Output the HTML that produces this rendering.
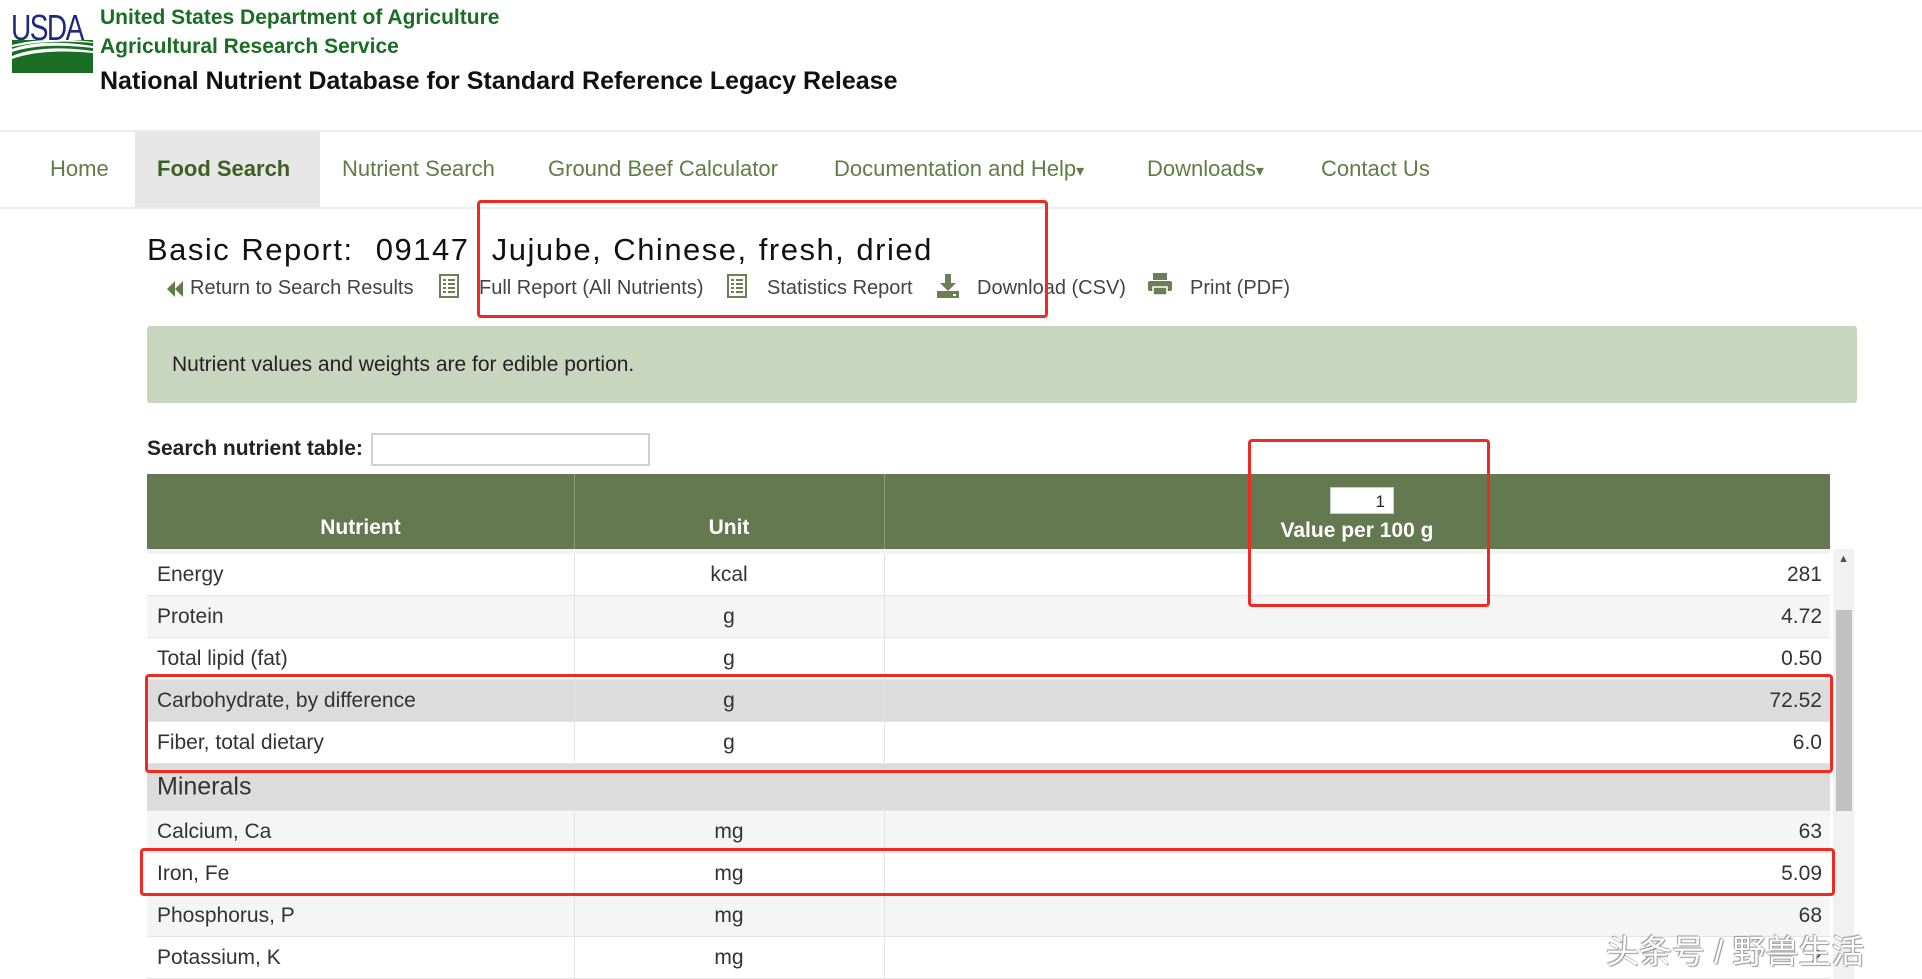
<!DOCTYPE html>
<html><head><meta charset="utf-8"><style>
*{margin:0;padding:0;box-sizing:border-box}
body{width:1922px;height:979px;overflow:hidden;background:#fff;font-family:"Liberation Sans",Arial,sans-serif;position:relative;color:#333}
.a{position:absolute;white-space:nowrap}
.nav{color:#5f7d45;font-size:22px;top:156px}
.lk{font-size:20px;color:#444;top:277px}
.row{position:absolute;left:147px;width:1683px;border-bottom:1px solid #e4e4e4}
.row span{position:absolute;top:50%;transform:translateY(-50%);font-size:21px;color:#333}
.n{left:10px}.u{left:427px;width:310px;text-align:center}.v{right:8px}
.red{position:absolute;border:3.5px solid #ee2a22;border-radius:4px}
.vd{position:absolute;width:1px;background:#e4e4e4}
</style></head><body>
<!-- logo -->
<div class="a" style="left:11px;top:7px;font-size:36px;color:#1f2a7c;letter-spacing:-2px;transform:scaleX(0.78);transform-origin:left">USDA</div>
<svg class="a" style="left:12px;top:40px" width="81" height="33" viewBox="0 0 81 33"><rect width="81" height="33" fill="#1a6e23"/><path d="M0 9 Q30 -2 81 6 L81 8 Q30 2 0 12Z" fill="#fff"/><path d="M0 16 Q30 4 81 11 L81 13 Q30 8 0 19Z" fill="#fff"/><path d="M0 5 Q35 -4 81 2 L81 3 Q35 -1 0 7Z" fill="#fff"/></svg>
<div class="a" style="left:100px;top:6px;font-size:21px;font-weight:bold;color:#1a6e23">United States Department of Agriculture</div>
<div class="a" style="left:100px;top:35px;font-size:21px;font-weight:bold;color:#1a6e23">Agricultural Research Service</div>
<div class="a" style="left:100px;top:67px;font-size:25px;font-weight:bold;color:#111">National Nutrient Database for Standard Reference Legacy Release</div>
<!-- nav -->
<div class="a" style="left:0;top:130px;width:1922px;height:2px;background:#ececec"></div>
<div class="a" style="left:0;top:207px;width:1922px;height:2px;background:#ececec"></div>
<div class="a" style="left:135px;top:132px;width:185px;height:75px;background:#e6e6e6"></div>
<div class="a nav" style="left:50px">Home</div>
<div class="a nav" style="left:157px;font-weight:bold;color:#3f5f22">Food Search</div>
<div class="a nav" style="left:342px">Nutrient Search</div>
<div class="a nav" style="left:548px">Ground Beef Calculator</div>
<div class="a nav" style="left:834px">Documentation and Help<span style="font-size:16px">▾</span></div>
<div class="a nav" style="left:1147px">Downloads<span style="font-size:16px">▾</span></div>
<div class="a nav" style="left:1321px">Contact Us</div>
<!-- title -->
<div class="a" style="left:147px;top:232px;font-size:31px;color:#111;letter-spacing:1.5px;word-spacing:1px">Basic Report:&nbsp; 09147&nbsp; Jujube, Chinese, fresh, dried</div>
<svg class="a" style="left:166px;top:280px" width="18" height="18"><path d="M9 1 L1 9 L9 17Z M17 1 L9 9 L17 17Z" fill="#5f7d45"/></svg>
<div class="a lk" style="left:190px">Return to Search Results</div>
<svg class="a" style="left:439px;top:274px" width="20" height="24"><rect x="1" y="1" width="18" height="22" fill="none" stroke="#6a7f56" stroke-width="2"/><path d="M4 6h3M9 6h7M4 10h3M9 10h7M4 14h3M9 14h7M4 18h3M9 18h7" stroke="#6a7f56" stroke-width="2"/></svg>
<div class="a lk" style="left:479px">Full Report (All Nutrients)</div>
<svg class="a" style="left:727px;top:274px" width="20" height="24"><rect x="1" y="1" width="18" height="22" fill="none" stroke="#6a7f56" stroke-width="2"/><path d="M4 6h3M9 6h7M4 10h3M9 10h7M4 14h3M9 14h7M4 18h3M9 18h7" stroke="#6a7f56" stroke-width="2"/></svg>
<div class="a lk" style="left:767px">Statistics Report</div>
<svg class="a" style="left:936px;top:273px" width="24" height="26"><path d="M9 1h6v9h5l-8 8-8-8h5z" fill="#6a7f56"/><rect x="1" y="18" width="22" height="7" fill="#6a7f56"/><rect x="17" y="21" width="3" height="2" fill="#fff"/></svg>
<div class="a lk" style="left:977px">Download (CSV)</div>
<svg class="a" style="left:1147px;top:272px" width="26" height="24"><rect x="6" y="1" width="14" height="7" fill="#6a7f56"/><rect x="1" y="9" width="24" height="10" rx="2" fill="#6a7f56"/><rect x="6" y="15" width="14" height="8" fill="#6a7f56" stroke="#fff" stroke-width="1.5"/></svg>
<div class="a lk" style="left:1190px">Print (PDF)</div>
<!-- notice -->
<div class="a" style="left:147px;top:326px;width:1710px;height:77px;background:#c9d6bf;border-radius:3px"></div>
<div class="a" style="left:172px;top:353px;font-size:21px;color:#222">Nutrient values and weights are for edible portion.</div>
<!-- search -->
<div class="a" style="left:147px;top:437px;font-size:21px;font-weight:bold;color:#222">Search nutrient table:</div>
<div class="a" style="left:371px;top:433px;width:279px;height:33px;border:2px solid #d0d0d0;background:#fff"></div>
<!-- table header -->
<div class="a" style="left:147px;top:474px;width:1683px;height:75px;background:#647950"></div>
<div class="a" style="left:574px;top:474px;width:1px;height:75px;background:#8a9a7a"></div>
<div class="a" style="left:884px;top:474px;width:1px;height:75px;background:#8a9a7a"></div>
<div class="a" style="left:147px;top:516px;width:427px;text-align:center;font-size:21px;font-weight:bold;color:#fff">Nutrient</div>
<div class="a" style="left:574px;top:516px;width:310px;text-align:center;font-size:21px;font-weight:bold;color:#fff">Unit</div>
<div class="a" style="left:1330px;top:487px;width:64px;height:27px;background:#fff;border:1px solid #ccc;font-size:17px;text-align:right;padding:4px 8px 0 0;color:#222">1</div>
<div class="a" style="left:884px;top:519px;width:946px;text-align:center;font-size:21px;font-weight:bold;color:#fff">Value per 100 g</div>
<!-- rows -->
<div class="a" style="left:147px;top:549px;width:1683px;height:5px;background:#f3f3f3"></div>
<div class="row" style="top:554px;height:42px;background:#fff"><span class="n">Energy</span><span class="u">kcal</span><span class="v">281</span></div>
<div class="row" style="top:596px;height:42px;background:#f5f5f5"><span class="n">Protein</span><span class="u">g</span><span class="v">4.72</span></div>
<div class="row" style="top:638px;height:42px;background:#fff"><span class="n">Total lipid (fat)</span><span class="u">g</span><span class="v">0.50</span></div>
<div class="row" style="top:680px;height:42px;background:#dcdcdc"><span class="n">Carbohydrate, by difference</span><span class="u">g</span><span class="v">72.52</span></div>
<div class="row" style="top:722px;height:42px;background:#fff"><span class="n">Fiber, total dietary</span><span class="u">g</span><span class="v">6.0</span></div>
<div class="row" style="top:764px;height:47px;background:#dcdcdc"><span class="n" style="font-size:25px">Minerals</span></div>
<div class="row" style="top:811px;height:42px;background:#f5f5f5"><span class="n">Calcium, Ca</span><span class="u">mg</span><span class="v">63</span></div>
<div class="row" style="top:853px;height:42px;background:#fff"><span class="n">Iron, Fe</span><span class="u">mg</span><span class="v">5.09</span></div>
<div class="row" style="top:895px;height:42px;background:#f5f5f5"><span class="n">Phosphorus, P</span><span class="u">mg</span><span class="v">68</span></div>
<div class="row" style="top:937px;height:42px;background:#fff"><span class="n">Potassium, K</span><span class="u">mg</span><span class="v">2</span></div>
<div class="vd" style="left:574px;top:554px;height:210px"></div>
<div class="vd" style="left:884px;top:554px;height:210px"></div>
<div class="vd" style="left:574px;top:811px;height:168px"></div>
<div class="vd" style="left:884px;top:811px;height:168px"></div>
<!-- scrollbar -->
<div class="a" style="left:1833px;top:549px;width:21px;height:430px;background:#f1f1f1"></div>
<div class="a" style="left:1836px;top:610px;width:16px;height:201px;background:#c1c1c1"></div>
<div class="a" style="left:1838px;top:553px;font-size:11px;color:#505050">▲</div>
<!-- red boxes -->
<div class="red" style="left:477px;top:200px;width:571px;height:118px"></div>
<div class="red" style="left:1248px;top:439px;width:242px;height:168px"></div>
<div class="red" style="left:145px;top:674px;width:1688px;height:99px"></div>
<div class="red" style="left:140px;top:848px;width:1695px;height:48px"></div>
<!-- watermark -->
<div class="a" style="left:1606px;top:925px;font-size:33px;color:#fff;font-family:'Liberation Sans','Noto Sans CJK SC',sans-serif;text-shadow:0 0 1px #888,1px 1px 1px #999,-1px -1px 1px #999">头条号 / 野兽生活</div>
</body></html>
